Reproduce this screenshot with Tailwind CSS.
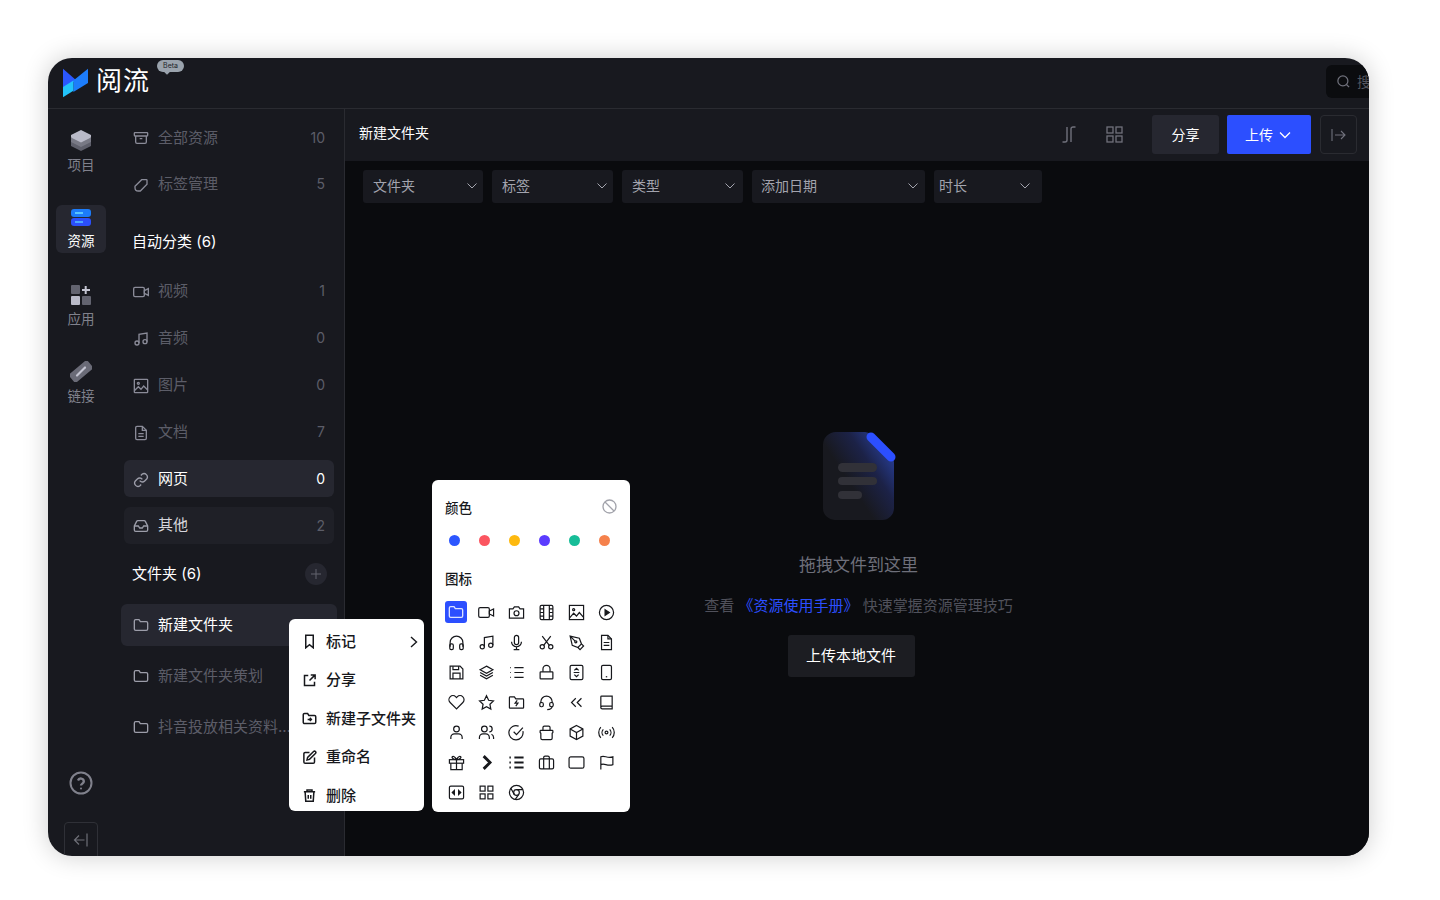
<!doctype html>
<html>
<head>
  <meta charset="UTF-8">
  <meta name="viewport" content="width=device-width, initial-scale=1.0">
  <script src="https://cdn.jsdelivr.net/npm/@tailwindcss/browser@4"></script>
</head>
<body class="bg-white h-[900px] overflow-hidden pl-[48px] pt-[58px] font-['Inter','Noto_Sans_CJK_SC',sans-serif]">
<!-- Window -->
<div class="relative w-[1321px] h-[798px] rounded-[24px] overflow-hidden bg-[#18191f] flex flex-col shadow-[0_0_26px_rgba(0,0,0,0.2)]">

  <!-- Top bar -->
  <header class="relative h-[51px] shrink-0 flex items-center border-b border-[#2a2b31] pl-[15px]">
    <svg class="w-[25px] h-[30px] -mt-[1px]" viewBox="0 0 77 88">
      <polygon points="0,0 38,33 38,38 0,60" fill="#2b57ff"/>
      <polygon points="77,0 77,44 32,72 32,36" fill="#1d7dfb"/>
      <polygon points="0,56 32,36 32,68 0,88" fill="#22c3fb"/>
    </svg>
    <span class="ml-[8px] -mt-[5px] text-[26px] leading-none font-normal text-white tracking-[1px]">阅流</span>
    <span class="relative ml-[7px] self-start mt-[2px] w-[27px] h-[12px] rounded-[6px] bg-[#9aa3ad] text-[7px] leading-[12px] text-center text-[#23252b]">Beta
      <span class="absolute left-[8px] top-[10px] w-[4px] h-[4px] rotate-45 bg-[#9aa3ad]"></span>
    </span>
    <div class="ml-auto mb-[4px] w-[60px] h-[33px] -mr-[17px] rounded-[6px] bg-[#0b0c0f] flex items-center pl-[10px] gap-[6px]">
      <svg class="w-[15px] h-[15px] text-[#70717c]" viewBox="0 0 24 24" fill="none" stroke="currentColor" stroke-width="2"><circle cx="11" cy="11" r="8"/><path d="m21 21-4.3-4.3"/></svg>
      <span class="text-[14px] text-[#55565f] whitespace-nowrap">搜索</span>
    </div>
  </header>

  <div class="flex-1 flex min-h-0">
    <!-- Icon rail -->
    <nav class="w-[76px] shrink-0 flex flex-col pt-[19px] pl-[8px]">
      <a class="w-[50px] h-[48px] mb-[29px] flex flex-col items-center pt-[2px] text-[13.500px] leading-[18px] text-[#80818c]">
        <svg class="w-[22px] h-[21px] mb-[5px]" viewBox="0 0 22 21">
          <path d="M11 6 21 11v5l-10 5-10-5v-5z" fill="#5e5f6b"/>
          <path d="M11 3 21 8v4l-10 5-10-5V8z" fill="#787985"/>
          <path d="M11 0 21 5v2.500L11 12.500 1 7.500V5z" fill="#b9bac8"/>
        </svg>
        项目
      </a>
      <a class="w-[50px] h-[48px] mb-[29px] rounded-[6px] bg-[#262730] flex flex-col items-center pt-[4px] text-[13.500px] leading-[18px] text-white">
        <div class="w-[20px] h-[8px] mb-[1px] rounded-[3px] bg-[#1c7cf9] flex items-center pl-[4px]"><div class="w-[8px] h-[2px] bg-[#59c6ff]"></div></div>
        <div class="w-[20px] h-[8px] mb-[6px] rounded-[3px] bg-[#2b4ffb] flex items-center pl-[4px]"><div class="w-[8px] h-[2px] bg-[#4ba6ff]"></div></div>
        资源
      </a>
      <a class="w-[50px] h-[48px] mb-[29px] flex flex-col items-center pt-[3px] text-[13.500px] leading-[18px] text-[#80818c]">
        <svg class="w-[20px] h-[20px] mb-[5px]" viewBox="0 0 20 20">
          <rect x="0" y="0" width="9" height="9" rx="1" fill="#62636f"/>
          <path d="M14.700 1v8M11 5h8" stroke="#c4c5d2" stroke-width="2"/>
          <rect x="0" y="11" width="9" height="9" rx="1" fill="#b9bac8"/>
          <rect x="11" y="11" width="9" height="9" rx="1" fill="#62636f"/>
        </svg>
        应用
      </a>
      <a class="w-[50px] h-[48px] flex flex-col items-center pt-[2px] text-[13.500px] leading-[18px] text-[#80818c]">
        <svg class="w-[22px] h-[21px] mb-[5px]" viewBox="0 0 22 21">
          <rect x="-1" y="5" width="24" height="11" rx="2.500" fill="#6a6b77" transform="rotate(-40 11 10.500)"/>
          <path d="M7 14.500 15 6.500" stroke="#c4c5d2" stroke-width="2.200" stroke-linecap="round"/>
        </svg>
        链接
      </a>
      <svg class="w-[24px] h-[24px] mt-auto ml-[13px] text-[#80818c]" viewBox="0 0 24 24" fill="none" stroke="currentColor" stroke-width="2"><circle cx="12" cy="12" r="10.500"/><path d="M9 9.500a3 3 0 0 1 5.800 1c0 2-2.800 2.200-2.800 4" stroke-width="2.400"/><circle cx="12" cy="17.500" r="1" fill="currentColor" stroke="none"/></svg>
      <div class="mt-[27px] ml-[8px] w-[34px] h-[40px] -mb-[6px] rounded-[4px] border border-[#2f3037] flex items-start justify-center pt-[9px]">
        <svg class="w-[16px] h-[16px] text-[#6f7079]" viewBox="0 0 16 16" fill="none" stroke="currentColor" stroke-width="1.200"><path d="M14 1.500v13M11.500 8H1.500M6 3.500 1.500 8 6 12.500"/></svg>
      </div>
    </nav>

    <!-- Resource list -->
    <aside class="w-[221px] shrink-0 border-r border-[#2a2b31] pt-[9px] pl-0 pr-[10px] flex flex-col text-[15px]">
      <div class="h-[37px] mb-[10px] pt-[3px] flex items-center pl-[9px] pr-[9px] text-[#5c5d68]">
        <svg class="w-[16px] h-[16px] mr-[9px] text-[#8a8b98]" viewBox="0 0 24 24" fill="none" stroke="currentColor" stroke-width="2"><rect x="2" y="4" width="20" height="5" rx="1"/><path d="M4 9v9a2 2 0 0 0 2 2h12a2 2 0 0 0 2-2V9M10 13h4"/></svg>
        全部资源<span class="ml-auto -mt-[2px] text-[14px]">10</span>
      </div>
      <div class="h-[37px] mb-[10px] pt-[2px] flex items-center pl-[9px] pr-[9px] text-[#5c5d68]">
        <svg class="w-[16px] h-[16px] mr-[9px] text-[#8a8b98]" viewBox="0 0 24 24" fill="none" stroke="currentColor" stroke-width="2"><path d="M3 14 13 4h7a1 1 0 0 1 1 1v6L11 21H8a5 5 0 0 1-5-5z"/></svg>
        标签管理<span class="ml-auto -mt-[2px] text-[14px]">5</span>
      </div>
      <div class="h-[20px] mt-[20px] mb-[20px] pl-[8px] leading-[20px] text-white">自动分类 (6)</div>
      <div class="h-[37px] mb-[10px] pt-[2px] flex items-center pl-[9px] pr-[9px] text-[#5c5d68]">
        <svg class="w-[16px] h-[16px] mr-[9px] text-[#8a8b98]" viewBox="0 0 24 24" fill="none" stroke="currentColor" stroke-width="2"><rect x="1" y="5" width="16" height="14" rx="2"/><path d="m17 10 6-3v10l-6-3z"/></svg>
        视频<span class="ml-auto -mt-[2px] text-[14px]">1</span>
      </div>
      <div class="h-[37px] mb-[10px] pt-[2px] flex items-center pl-[9px] pr-[9px] text-[#5c5d68]">
        <svg class="w-[16px] h-[16px] mr-[9px] text-[#8a8b98]" viewBox="0 0 24 24" fill="none" stroke="currentColor" stroke-width="2"><path d="M9 18V5l12-2v13"/><circle cx="6" cy="18" r="3"/><circle cx="18" cy="16" r="3"/></svg>
        音频<span class="ml-auto -mt-[2px] text-[14px]">0</span>
      </div>
      <div class="h-[37px] mb-[10px] pt-[2px] flex items-center pl-[9px] pr-[9px] text-[#5c5d68]">
        <svg class="w-[16px] h-[16px] mr-[9px] text-[#8a8b98]" viewBox="0 0 24 24" fill="none" stroke="currentColor" stroke-width="2"><rect x="2" y="2" width="20" height="20" rx="1"/><circle cx="8" cy="8" r="1.500"/><path d="m2 19 6-6 4 4 4-5 6 6"/></svg>
        图片<span class="ml-auto -mt-[2px] text-[14px]">0</span>
      </div>
      <div class="h-[37px] mb-[10px] pt-[2px] flex items-center pl-[9px] pr-[9px] text-[#5c5d68]">
        <svg class="w-[16px] h-[16px] mr-[9px] text-[#8a8b98]" viewBox="0 0 24 24" fill="none" stroke="currentColor" stroke-width="2"><path d="M14 2H6a2 2 0 0 0-2 2v16a2 2 0 0 0 2 2h12a2 2 0 0 0 2-2V8z"/><path d="M14 2v6h6M8 13h8M8 17h8"/></svg>
        文档<span class="ml-auto -mt-[2px] text-[14px]">7</span>
      </div>
      <div class="h-[37px] mb-[10px] pt-[2px] rounded-[6px] bg-[#262730] flex items-center pl-[9px] pr-[9px] text-white">
        <svg class="w-[16px] h-[16px] mr-[9px] text-[#9c9da9]" viewBox="0 0 24 24" fill="none" stroke="currentColor" stroke-width="2"><path d="M10 13a5 5 0 0 0 7.500.500l3-3a5 5 0 0 0-7-7l-1.700 1.700"/><path d="M14 11a5 5 0 0 0-7.500-.500l-3 3a5 5 0 0 0 7 7l1.700-1.700"/></svg>
        网页<span class="ml-auto -mt-[2px] text-[14px]">0</span>
      </div>
      <div class="h-[37px] mb-[10px] rounded-[6px] bg-[#1f2027] flex items-center pl-[9px] pr-[9px] text-[#d6d6dc]">
        <svg class="w-[16px] h-[16px] mr-[9px] text-[#9c9da9]" viewBox="0 0 24 24" fill="none" stroke="currentColor" stroke-width="2"><path d="M22 12h-6l-2 3h-4l-2-3H2"/><path d="M5.500 5 2 12v6a2 2 0 0 0 2 2h16a2 2 0 0 0 2-2v-6l-3.500-7a2 2 0 0 0-1.800-1H7.300a2 2 0 0 0-1.800 1z"/></svg>
        其他<span class="ml-auto text-[14px] text-[#5c5d68]">2</span>
      </div>
      <div class="h-[20px] mt-[10px] mb-[20px] pl-[8px] pr-[7px] leading-[20px] text-white flex items-center justify-between">文件夹 (6)
        <span class="w-[22px] h-[22px] rounded-full bg-[#262730] flex items-center justify-center">
          <svg class="w-[10px] h-[10px] text-[#63646f]" viewBox="0 0 10 10" fill="none" stroke="currentColor"><path d="M5 0v10M0 5h10"/></svg>
        </span>
      </div>
      <div class="h-[42px] mb-[9px] -mx-[3px] rounded-[6px] bg-[#262730] flex items-center pl-[12px] text-white">
        <svg class="w-[16px] h-[16px] mr-[9px] text-[#9c9da9]" viewBox="0 0 24 24" fill="none" stroke="currentColor" stroke-width="2"><path d="M2 6a2 2 0 0 1 2-2h5l2 3h9a2 2 0 0 1 2 2v9a2 2 0 0 1-2 2H4a2 2 0 0 1-2-2z"/></svg>
        新建文件夹
      </div>
      <div class="h-[42px] mb-[9px] -mx-[3px] flex items-center pl-[12px] text-[#5c5d68]">
        <svg class="w-[16px] h-[16px] mr-[9px] text-[#9c9da9]" viewBox="0 0 24 24" fill="none" stroke="currentColor" stroke-width="2"><path d="M2 6a2 2 0 0 1 2-2h5l2 3h9a2 2 0 0 1 2 2v9a2 2 0 0 1-2 2H4a2 2 0 0 1-2-2z"/></svg>
        新建文件夹策划
      </div>
      <div class="h-[42px] mb-[9px] -mx-[3px] flex items-center pl-[12px] text-[#5c5d68]">
        <svg class="w-[16px] h-[16px] mr-[9px] text-[#9c9da9]" viewBox="0 0 24 24" fill="none" stroke="currentColor" stroke-width="2"><path d="M2 6a2 2 0 0 1 2-2h5l2 3h9a2 2 0 0 1 2 2v9a2 2 0 0 1-2 2H4a2 2 0 0 1-2-2z"/></svg>
        抖音投放相关资料...
      </div>
    </aside>

    <!-- Main -->
    <main class="flex-1 min-w-0 flex flex-col bg-[#0a0b0e]">
      <div class="h-[52px] shrink-0 bg-[#18191f] flex items-center pl-[14px] pr-[12px]">
        <span class="text-[14px] text-white -mt-[6px]">新建文件夹</span>
        <svg class="ml-auto -mt-[1px] w-[14px] h-[17px] text-[#70717c]" viewBox="0 0 14 17" fill="none" stroke="currentColor" stroke-width="1.400"><path d="M5 1v13a2 2 0 0 1-2 2H.5M9 16V3a2 2 0 0 1 2-2h2.500"/></svg>
        <svg class="ml-[30px] -mt-[1px] w-[17px] h-[17px] text-[#70717c]" viewBox="0 0 17 17" fill="none" stroke="currentColor" stroke-width="1.300"><rect x="1" y="1" width="6" height="6"/><rect x="10" y="1" width="6" height="6"/><rect x="1" y="10" width="6" height="6"/><rect x="10" y="10" width="6" height="6"/></svg>
        <button class="ml-[29px] w-[67px] h-[39px] -mt-[1px] rounded-[3px] bg-[#262730] text-[14px] text-white">分享</button>
        <button class="ml-[8px] w-[84px] h-[39px] -mt-[1px] rounded-[2px] bg-[#2c4fff] pr-[2px] text-[14px] text-white flex items-center justify-center gap-[6px]">上传
          <svg class="w-[12px] h-[8px]" viewBox="0 0 12 8" fill="none" stroke="currentColor" stroke-width="1.300"><path d="m1 1.500 5 5 5-5"/></svg>
        </button>
        <div class="ml-[9px] w-[37px] h-[39px] -mt-[1px] rounded-[4px] border border-[#2a2b31] flex items-center justify-center">
          <svg class="w-[15px] h-[14px] text-[#70717c]" viewBox="0 0 15 14" fill="none" stroke="currentColor" stroke-width="1.100"><path d="M1 1v12M4 7h10M10 3l4 4-4 4"/></svg>
        </div>
      </div>

      <!-- Filters -->
      <div class="flex pt-[9px] pl-[18px] text-[14px] text-[#a3a4ae]">
        <div class="w-[120px] h-[33px] pb-[2px] mr-[9px] rounded-[3px] bg-[#18191f] flex items-center pl-[10px] pr-[6px] justify-between">文件夹
          <svg class="w-[10px] h-[6px]" viewBox="0 0 10 6" fill="none" stroke="currentColor"><path d="m.5.500 4.500 4.500L9.500.500"/></svg>
        </div>
        <div class="w-[121px] h-[33px] pb-[2px] mr-[9px] rounded-[3px] bg-[#18191f] flex items-center pl-[10px] pr-[6px] justify-between">标签
          <svg class="w-[10px] h-[6px]" viewBox="0 0 10 6" fill="none" stroke="currentColor"><path d="m.5.500 4.500 4.500L9.500.500"/></svg>
        </div>
        <div class="w-[121px] h-[33px] pb-[2px] mr-[9px] rounded-[3px] bg-[#18191f] flex items-center pl-[10px] pr-[8px] justify-between">类型
          <svg class="w-[10px] h-[6px]" viewBox="0 0 10 6" fill="none" stroke="currentColor"><path d="m.5.500 4.500 4.500L9.500.500"/></svg>
        </div>
        <div class="w-[173px] h-[33px] pb-[2px] mr-[9px] rounded-[3px] bg-[#18191f] flex items-center pl-[9px] pr-[7px] justify-between">添加日期
          <svg class="w-[10px] h-[6px]" viewBox="0 0 10 6" fill="none" stroke="currentColor"><path d="m.5.500 4.500 4.500L9.500.500"/></svg>
        </div>
        <div class="w-[108px] h-[33px] pb-[2px] rounded-[3px] bg-[#18191f] flex items-center pl-[5px] pr-[12px] justify-between">时长
          <svg class="w-[10px] h-[6px]" viewBox="0 0 10 6" fill="none" stroke="currentColor"><path d="m.5.500 4.500 4.500L9.500.500"/></svg>
        </div>
      </div>

      <!-- Empty state -->
      <div class="flex flex-col items-center pt-[228px]">
        <svg class="w-[74px] h-[90px] ml-[3px]" viewBox="0 0 74 90">
          <defs>
            <linearGradient id="docFill" x1="0.900" y1="0.100" x2="0.350" y2="0.550">
              <stop offset="0" stop-color="#28409c"/>
              <stop offset="0.500" stop-color="#1c2247"/>
              <stop offset="1" stop-color="#18191f"/>
            </linearGradient>
          </defs>
          <path d="M14 1h29a8 8 0 0 1 6 3l21 22a8 8 0 0 1 2 5v46a12 12 0 0 1-12 12H14A12 12 0 0 1 1 77V14A13 13 0 0 1 14 1z" fill="url(#docFill)"/>
          <path d="M49 6 69 26" stroke="#2c4fff" stroke-width="9" stroke-linecap="round"/>
          <rect x="16" y="32" width="39" height="9" rx="4.500" fill="#313138"/>
          <rect x="16" y="46" width="39" height="8" rx="4" fill="#313138"/>
          <rect x="16" y="60" width="24" height="8" rx="4" fill="#313138"/>
        </svg>
        <p class="ml-[3px] mt-[32px] text-[17px] leading-[24px] text-[#6e6f7a]">拖拽文件到这里</p>
        <p class="ml-[3px] mt-[19px] text-[15px] leading-[20px] text-[#50515b]">查看 <span class="text-[#2c4fff]">《资源使用手册》</span> 快速掌握资源管理技巧</p>
        <button class="mt-[19px] mr-[12px] w-[127px] h-[42px] rounded-[3px] bg-[#1c1d22] text-[15px] text-white">上传本地文件</button>
      </div>
    </main>
  </div>

  <!-- Context menu -->
  <div class="absolute left-[241px] top-[561px] w-[135px] h-[192px] rounded-[6px] bg-white pt-[3.500px] text-[15px] font-medium text-[#17181c]">
    <div class="h-[38.500px] flex items-center pl-[13px]">
      <svg class="w-[15px] h-[15px] mr-[9px]" viewBox="0 0 24 24" fill="none" stroke="currentColor" stroke-width="2.400"><path d="M6 2h12v20l-6-5-6 5z"/></svg>
      标记
      <svg class="w-[8px] h-[12px] ml-auto mr-[6px]" viewBox="0 0 8 12" fill="none" stroke="currentColor" stroke-width="1.400"><path d="m1 1 5.500 5L1 11"/></svg>
    </div>
    <div class="h-[38.500px] flex items-center pl-[13px]">
      <svg class="w-[15px] h-[15px] mr-[9px]" viewBox="0 0 24 24" fill="none" stroke="currentColor" stroke-width="2.400"><path d="M10 4H4v16h16v-6M14 3h7v7M21 3l-9 9"/></svg>
      分享
    </div>
    <div class="h-[38.500px] flex items-center pl-[13px]">
      <svg class="w-[15px] h-[15px] mr-[9px]" viewBox="0 0 24 24" fill="none" stroke="currentColor" stroke-width="2.400"><path d="M2 6a2 2 0 0 1 2-2h5l2 3h9a2 2 0 0 1 2 2v9a2 2 0 0 1-2 2H4a2 2 0 0 1-2-2z"/><path d="M9 13.500h6M12.500 11l2.500 2.500-2.500 2.500"/></svg>
      新建子文件夹
    </div>
    <div class="h-[38.500px] flex items-center pl-[13px]">
      <svg class="w-[15px] h-[15px] mr-[9px]" viewBox="0 0 24 24" fill="none" stroke="currentColor" stroke-width="2.400"><path d="M12 4H5a2 2 0 0 0-2 2v13a2 2 0 0 0 2 2h13a2 2 0 0 0 2-2v-7"/><path d="M18.500 2.500a2.100 2.100 0 0 1 3 3L12 15l-4 1 1-4z"/></svg>
      重命名
    </div>
    <div class="h-[38.500px] flex items-center pl-[13px]">
      <svg class="w-[15px] h-[15px] mr-[9px]" viewBox="0 0 24 24" fill="none" stroke="currentColor" stroke-width="2.400"><path d="M3 6h18M8 6V3h8v3M5 6l1 15h12l1-15M10 11v6M14 11v6"/></svg>
      删除
    </div>
  </div>

  <!-- Colour and icon picker -->
  <div class="absolute left-[384px] top-[422px] w-[198px] h-[332px] rounded-[6px] bg-white text-[#17181c]">
    <div class="flex items-center justify-between pt-[18px] pl-[13px] pr-[13px]">
      <span class="text-[13.500px] leading-[20px] font-medium">颜色</span>
      <svg class="w-[15px] h-[15px] -mt-[4px] text-[#a2a3ab]" viewBox="0 0 15 15" fill="none" stroke="currentColor" stroke-width="1.300"><circle cx="7.500" cy="7.500" r="6.500"/><path d="m3 3 9 9"/></svg>
    </div>
    <div class="flex pl-[7px] mt-[17px]">
      <div class="w-[30px] h-[11px] flex justify-center"><div class="w-[11px] h-[11px] rounded-full bg-[#2c56ff]"></div></div>
      <div class="w-[30px] h-[11px] flex justify-center"><div class="w-[11px] h-[11px] rounded-full bg-[#fb5560]"></div></div>
      <div class="w-[30px] h-[11px] flex justify-center"><div class="w-[11px] h-[11px] rounded-full bg-[#fdb90f]"></div></div>
      <div class="w-[30px] h-[11px] flex justify-center"><div class="w-[11px] h-[11px] rounded-full bg-[#5b3cff]"></div></div>
      <div class="w-[30px] h-[11px] flex justify-center"><div class="w-[11px] h-[11px] rounded-full bg-[#17bd98]"></div></div>
      <div class="w-[30px] h-[11px] flex justify-center"><div class="w-[11px] h-[11px] rounded-full bg-[#f5814c]"></div></div>
    </div>
    <div class="pl-[13px] mt-[23px] text-[13.500px] leading-[20px] font-medium">图标</div>
    <div class="grid grid-cols-[repeat(6,30px)] auto-rows-[30px] pl-[9px] mt-[8px] place-items-center [&>svg]:w-[17px] [&>svg]:h-[17px] [&>svg]:fill-none [&>svg]:stroke-current [&>svg]:stroke-[1.700]">
      <div class="w-[22px] h-[22px] rounded-[3px] bg-[#2c4fff] flex items-center justify-center">
        <svg class="w-[16px] h-[16px] text-[#dbe2ff]" viewBox="0 0 24 24" fill="none" stroke="currentColor" stroke-width="2"><path d="M2 6a2 2 0 0 1 2-2h5l2 3h9a2 2 0 0 1 2 2v9a2 2 0 0 1-2 2H4a2 2 0 0 1-2-2z"/></svg>
      </div>
      <svg viewBox="0 0 24 24"><rect x="1" y="5" width="15" height="14" rx="2"/><path d="m16 10 6-3v10l-6-3z"/></svg>
      <svg viewBox="0 0 24 24"><path d="M2 7h5l2-3h6l2 3h5v13H2z"/><circle cx="12" cy="13" r="3.500"/></svg>
      <svg viewBox="0 0 24 24"><rect x="3" y="2" width="18" height="20" rx="2"/><path d="M8 2v20M16 2v20M3 7h5M3 12h5M3 17h5M16 7h5M16 12h5M16 17h5"/></svg>
      <svg viewBox="0 0 24 24"><rect x="2" y="2" width="20" height="20"/><circle cx="8" cy="8" r="1.500"/><path d="m2 20 6-7 4 4 4-5 6 7"/></svg>
      <svg viewBox="0 0 24 24"><circle cx="12" cy="12" r="10"/><path d="m10 8 6 4-6 4z" fill="currentColor"/></svg>

      <svg viewBox="0 0 24 24"><path d="M3 18v-6a9 9 0 0 1 18 0v6"/><rect x="2.500" y="14" width="5" height="8" rx="2"/><rect x="16.500" y="14" width="5" height="8" rx="2"/></svg>
      <svg viewBox="0 0 24 24"><path d="M9 18V5l12-2v13"/><circle cx="6" cy="18" r="3"/><circle cx="18" cy="16" r="3"/></svg>
      <svg viewBox="0 0 24 24"><rect x="9" y="2" width="6" height="13" rx="3"/><path d="M5 11a7 7 0 0 0 14 0M12 18v4M8 22h8"/></svg>
      <svg viewBox="0 0 24 24"><circle cx="6" cy="18" r="3"/><circle cx="18" cy="18" r="3"/><path d="M8 16 18 3M16 16 6 3"/></svg>
      <svg viewBox="0 0 24 24"><path d="m3 3 13 3 3 8-5 5-8-3zM3 3l7 7M14 19l3 3 5-5-3-3"/><circle cx="11" cy="11" r="1.500"/></svg>
      <svg viewBox="0 0 24 24"><path d="M14 2H5v20h14V7z"/><path d="M14 2v5h5M8 12h8M8 16h8"/></svg>

      <svg viewBox="0 0 24 24"><path d="M3 3h14l4 4v14H3z"/><path d="M7 21v-8h10v8M7 3v5h8V3"/></svg>
      <svg viewBox="0 0 24 24"><path d="m12 3 9 5-9 5-9-5z"/><path d="m3 12 9 5 9-5M3 16l9 5 9-5"/></svg>
      <svg viewBox="0 0 24 24"><path d="M9 5h13M9 12h13M9 19h13M3 5h1M3 12h1M3 19h1"/></svg>
      <svg viewBox="0 0 24 24"><rect x="3" y="11" width="18" height="10" rx="1"/><path d="M7 11V7a5 5 0 0 1 10 0v4"/></svg>
      <svg viewBox="0 0 24 24"><rect x="3" y="2" width="18" height="20" rx="2"/><path d="m9 9 3-3 3 3M9 15l3 3 3-3M8 12h8"/></svg>
      <svg viewBox="0 0 24 24"><rect x="5" y="2" width="14" height="20" rx="2"/><path d="M11 18h2"/></svg>

      <svg viewBox="0 0 24 24"><path d="M12 21 3 12a5.500 5.500 0 0 1 8-8l1 1 1-1a5.500 5.500 0 0 1 8 8z"/></svg>
      <svg viewBox="0 0 24 24"><path d="m12 2.500 3 6.300 6.800.900-5 4.700 1.300 6.800-6.100-3.300-6.100 3.300 1.300-6.800-5-4.700 6.800-.900z"/></svg>
      <svg viewBox="0 0 24 24"><path d="M2 5a1 1 0 0 1 1-1h6l2 3h10a1 1 0 0 1 1 1v11a1 1 0 0 1-1 1H3a1 1 0 0 1-1-1z"/><path d="m13 10-3 4h4l-3 4" transform="translate(0 -1)"/></svg>
      <svg viewBox="0 0 24 24"><path d="M4 13v-2a8 8 0 0 1 16 0v2M20 17c0 3-3 5-7 5"/><rect x="2.500" y="12" width="5" height="6" rx="2"/><rect x="16.500" y="12" width="5" height="6" rx="2"/></svg>
      <svg viewBox="0 0 24 24"><path d="m11 6-6 6 6 6M19 6l-6 6 6 6"/></svg>
      <svg viewBox="0 0 24 24"><path d="M4 20V4a1 1 0 0 1 1-1h15v18H6a2 2 0 0 1-2-2 2 2 0 0 1 2-2h14"/></svg>

      <svg viewBox="0 0 24 24"><circle cx="12" cy="7" r="4"/><path d="M4 21v-2a5 5 0 0 1 5-5h6a5 5 0 0 1 5 5v2"/></svg>
      <svg viewBox="0 0 24 24"><circle cx="9" cy="7" r="4"/><path d="M2 21v-2a5 5 0 0 1 5-5h4a5 5 0 0 1 5 5v2M16 3a4 4 0 0 1 0 8M22 21v-2a5 5 0 0 0-3-4.500"/></svg>
      <svg viewBox="0 0 24 24"><path d="M21 10a10 10 0 1 1-6-7"/><path d="m8 11 4 4 9-10"/></svg>
      <svg viewBox="0 0 24 24"><path d="M4 9h16a1 1 0 0 1 1 1v2l-1 1v7a2 2 0 0 1-2 2H6a2 2 0 0 1-2-2v-7l-1-1v-2a1 1 0 0 1 1-1zM7 9V5a2 2 0 0 1 2-2h6a2 2 0 0 1 2 2v4"/></svg>
      <svg viewBox="0 0 24 24"><path d="m12 2 9 5v10l-9 5-9-5V7z"/><path d="m3 7 9 5 9-5M12 12v10"/></svg>
      <svg viewBox="0 0 24 24"><circle cx="12" cy="12" r="2"/><path d="M7.500 7.500a6.500 6.500 0 0 0 0 9M16.500 7.500a6.500 6.500 0 0 1 0 9M4 4.500a11 11 0 0 0 0 15M20 4.500a11 11 0 0 1 0 15"/></svg>

      <svg viewBox="0 0 24 24"><rect x="2" y="8" width="20" height="5"/><path d="M4 13v9h16v-9M12 8v14M12 8S9 2 6.500 3.500 8 8 12 8zM12 8s3-6 5.500-4.500S16 8 12 8z"/></svg>
      <svg viewBox="0 0 24 24" style="stroke-width:4"><path d="m8 3 9 9-9 9"/></svg>
      <svg viewBox="0 0 24 24" style="stroke-width:2.800"><path d="M9 5h13M9 12h13M9 19h13M2 5h2M2 12h2M2 19h2"/></svg>
      <svg viewBox="0 0 24 24"><rect x="2" y="7" width="20" height="14" rx="2"/><path d="M16 21V5a2 2 0 0 0-2-2h-4a2 2 0 0 0-2 2v16"/></svg>
      <svg viewBox="0 0 24 24"><rect x="1.500" y="4" width="21" height="16" rx="2.500"/></svg>
      <svg viewBox="0 0 24 24"><path d="M4 22V4c5-3 9 3 17 0v11c-8 3-12-3-17 0"/></svg>

      <svg viewBox="0 0 24 24"><rect x="2" y="3" width="20" height="18" rx="2"/><path d="M9 9l-3 3 3 3zM15 9l3 3-3 3z" fill="currentColor"/></svg>
      <svg viewBox="0 0 24 24"><rect x="3" y="3" width="7" height="7"/><rect x="14" y="3" width="7" height="7"/><rect x="3" y="14" width="7" height="7"/><rect x="14" y="14" width="7" height="7"/></svg>
      <svg viewBox="0 0 24 24"><circle cx="12" cy="12" r="10"/><circle cx="12" cy="12" r="4"/><path d="M21 8h-9M4 6l5 9M10 22l5-7"/></svg>
    </div>
  </div>
</div>
</body>
</html>
